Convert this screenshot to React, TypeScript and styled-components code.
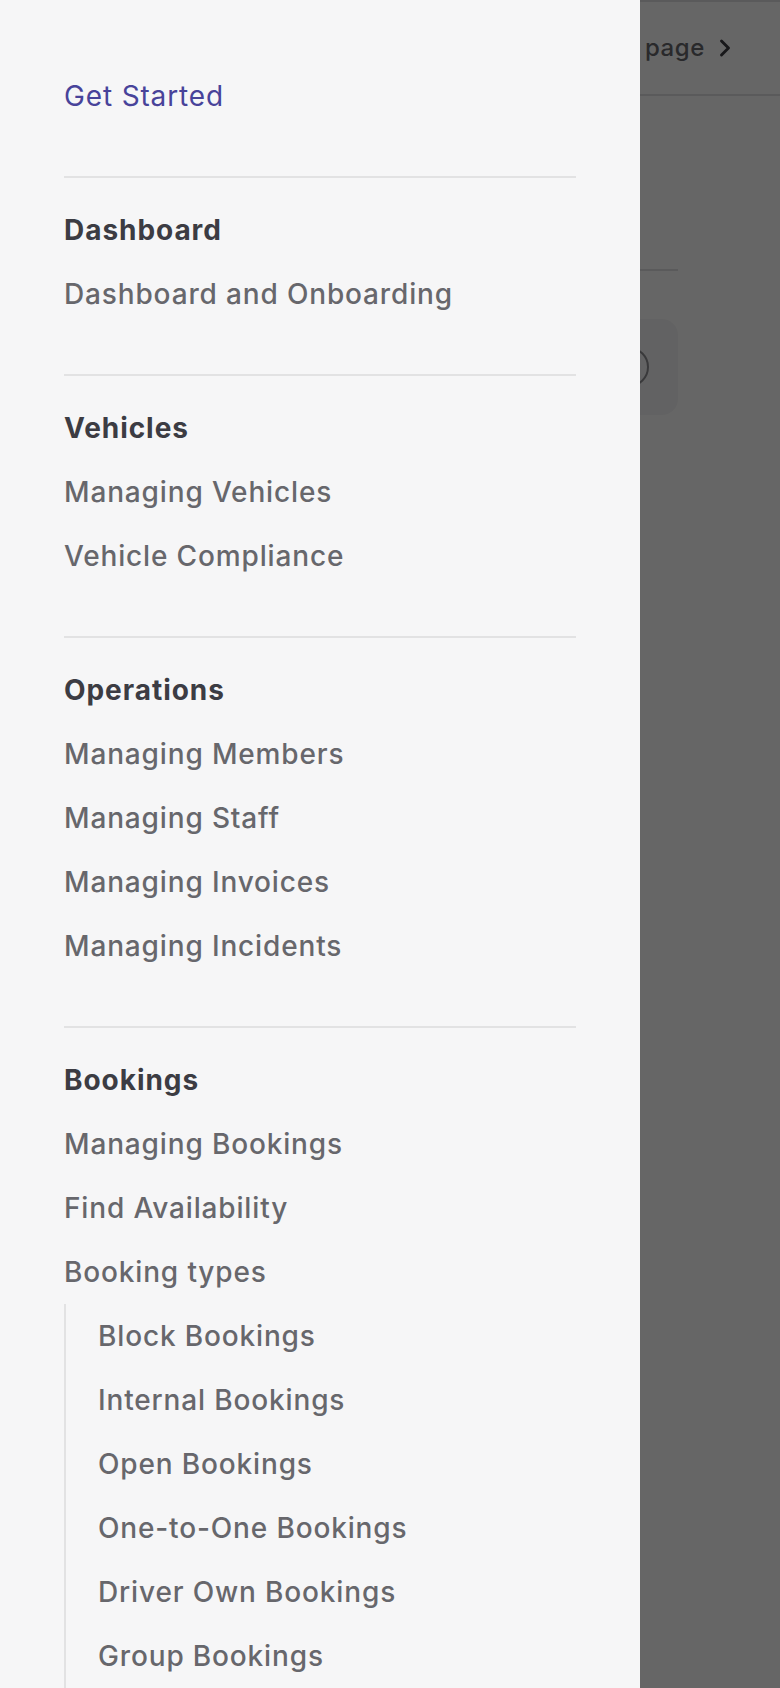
import React from "react";
import styled, { createGlobalStyle } from "styled-components";
import { ChevronRight } from "lucide-react";

const GlobalStyle = createGlobalStyle`
    html, body {
        margin: 0;
        padding: 0;
        background: #ffffff;
        font-family: Inter, "Noto Sans", "Liberation Sans", sans-serif;
        -webkit-font-smoothing: antialiased;
    }
    * {
        box-sizing: border-box;
    }
`;

const Screen = styled.div`
    position: relative;
    width: 780px;
    height: 1688px;
    overflow: hidden;
    background: #ffffff;
`;

/* page behind the drawer */
const Page = styled.div`
    display: flex;
    flex-direction: column;
`;

const LocalNav = styled.div`
    height: 96px;
    border-top: 2px solid #e2e2e3;
    border-bottom: 2px solid #e2e2e3;
    display: flex;
    align-items: center;
    justify-content: flex-end;
    padding: 0 41px 0 48px;
`;

const OutlineButton = styled.div`
    display: flex;
    align-items: center;
    gap: 6px;
    font-size: 24px;
    font-weight: 500;
    color: #67676c;
    line-height: 48px;
    letter-spacing: 0.6px;

    & svg {
        color: #3c3c43;
    }
`;

const Content = styled.div`
    padding: 0 102px 0 48px;
    display: flex;
    flex-direction: column;
`;

const TitleRule = styled.div`
    margin-top: 173px;
    height: 2px;
    background: #e2e2e3;
`;

const Card = styled.div`
    margin-top: 48px;
    height: 96px;
    border-radius: 16px;
    background: #f6f6f7;
    display: flex;
    align-items: center;
    justify-content: flex-end;
    padding-right: 29px;
`;

const Circle = styled.div`
    width: 40px;
    height: 40px;
    border-radius: 50%;
    border: 2px solid #3c3c43;
    opacity: 0.55;
`;

const Backdrop = styled.div`
    position: absolute;
    inset: 0;
    background: rgba(0, 0, 0, 0.6);
`;

/* sidebar drawer */
const Sidebar = styled.nav`
    position: absolute;
    top: 0;
    left: 0;
    bottom: 0;
    width: 640px;
    background: #f6f6f7;
    padding: 64px 64px 192px;
    overflow: hidden;
`;

const Group = styled.section`
    padding-bottom: 48px;

    & + & {
        border-top: 2px solid #e2e2e3;
        padding-top: 20px;
    }
`;

const Heading = styled.h2`
    margin: 0;
    padding: 8px 0;
    font-size: 28px;
    line-height: 48px;
    font-weight: 700;
    letter-spacing: 0.95px;
    color: #3c3c43;
`;

const Item = styled.a<{ $active?: boolean }>`
    display: block;
    padding: 8px 0;
    font-size: 28px;
    line-height: 48px;
    font-weight: ${(p) => (p.$active ? 400 : 500)};
    letter-spacing: 0.85px;
    color: ${(p) => (p.$active ? "#48439a" : "#67676c")};
    text-decoration: none;
    white-space: nowrap;
`;

const SubItems = styled.div`
    border-left: 2px solid #e2e2e3;
    padding-left: 32px;
`;

type Section = { title: string; items: string[]; sub?: string[] };

const sections: Section[] = [
    { title: "Dashboard", items: ["Dashboard and Onboarding"] },
    { title: "Vehicles", items: ["Managing Vehicles", "Vehicle Compliance"] },
    {
        title: "Operations",
        items: ["Managing Members", "Managing Staff", "Managing Invoices", "Managing Incidents"],
    },
    {
        title: "Bookings",
        items: ["Managing Bookings", "Find Availability", "Booking types"],
        sub: [
            "Block Bookings",
            "Internal Bookings",
            "Open Bookings",
            "One-to-One Bookings",
            "Driver Own Bookings",
            "Group Bookings",
        ],
    },
];

const App: React.FC = () => {
    return (
        <Screen>
            <GlobalStyle />
            <Page>
                <LocalNav>
                    <OutlineButton>
                        On this page
                        <ChevronRight size={28} strokeWidth={2.5} />
                    </OutlineButton>
                </LocalNav>
                <Content>
                    <TitleRule />
                    <Card>
                        <Circle />
                    </Card>
                </Content>
            </Page>
            <Backdrop />
            <Sidebar>
                <Group>
                    <Item $active href="#">Get Started</Item>
                </Group>
                {sections.map((s) => (
                    <Group key={s.title}>
                        <Heading>{s.title}</Heading>
                        {s.items.map((i) => (
                            <Item key={i} href="#">{i}</Item>
                        ))}
                        {s.sub && (
                            <SubItems>
                                {s.sub.map((i) => (
                                    <Item key={i} href="#">{i}</Item>
                                ))}
                            </SubItems>
                        )}
                    </Group>
                ))}
            </Sidebar>
        </Screen>
    );
};

export default App;
